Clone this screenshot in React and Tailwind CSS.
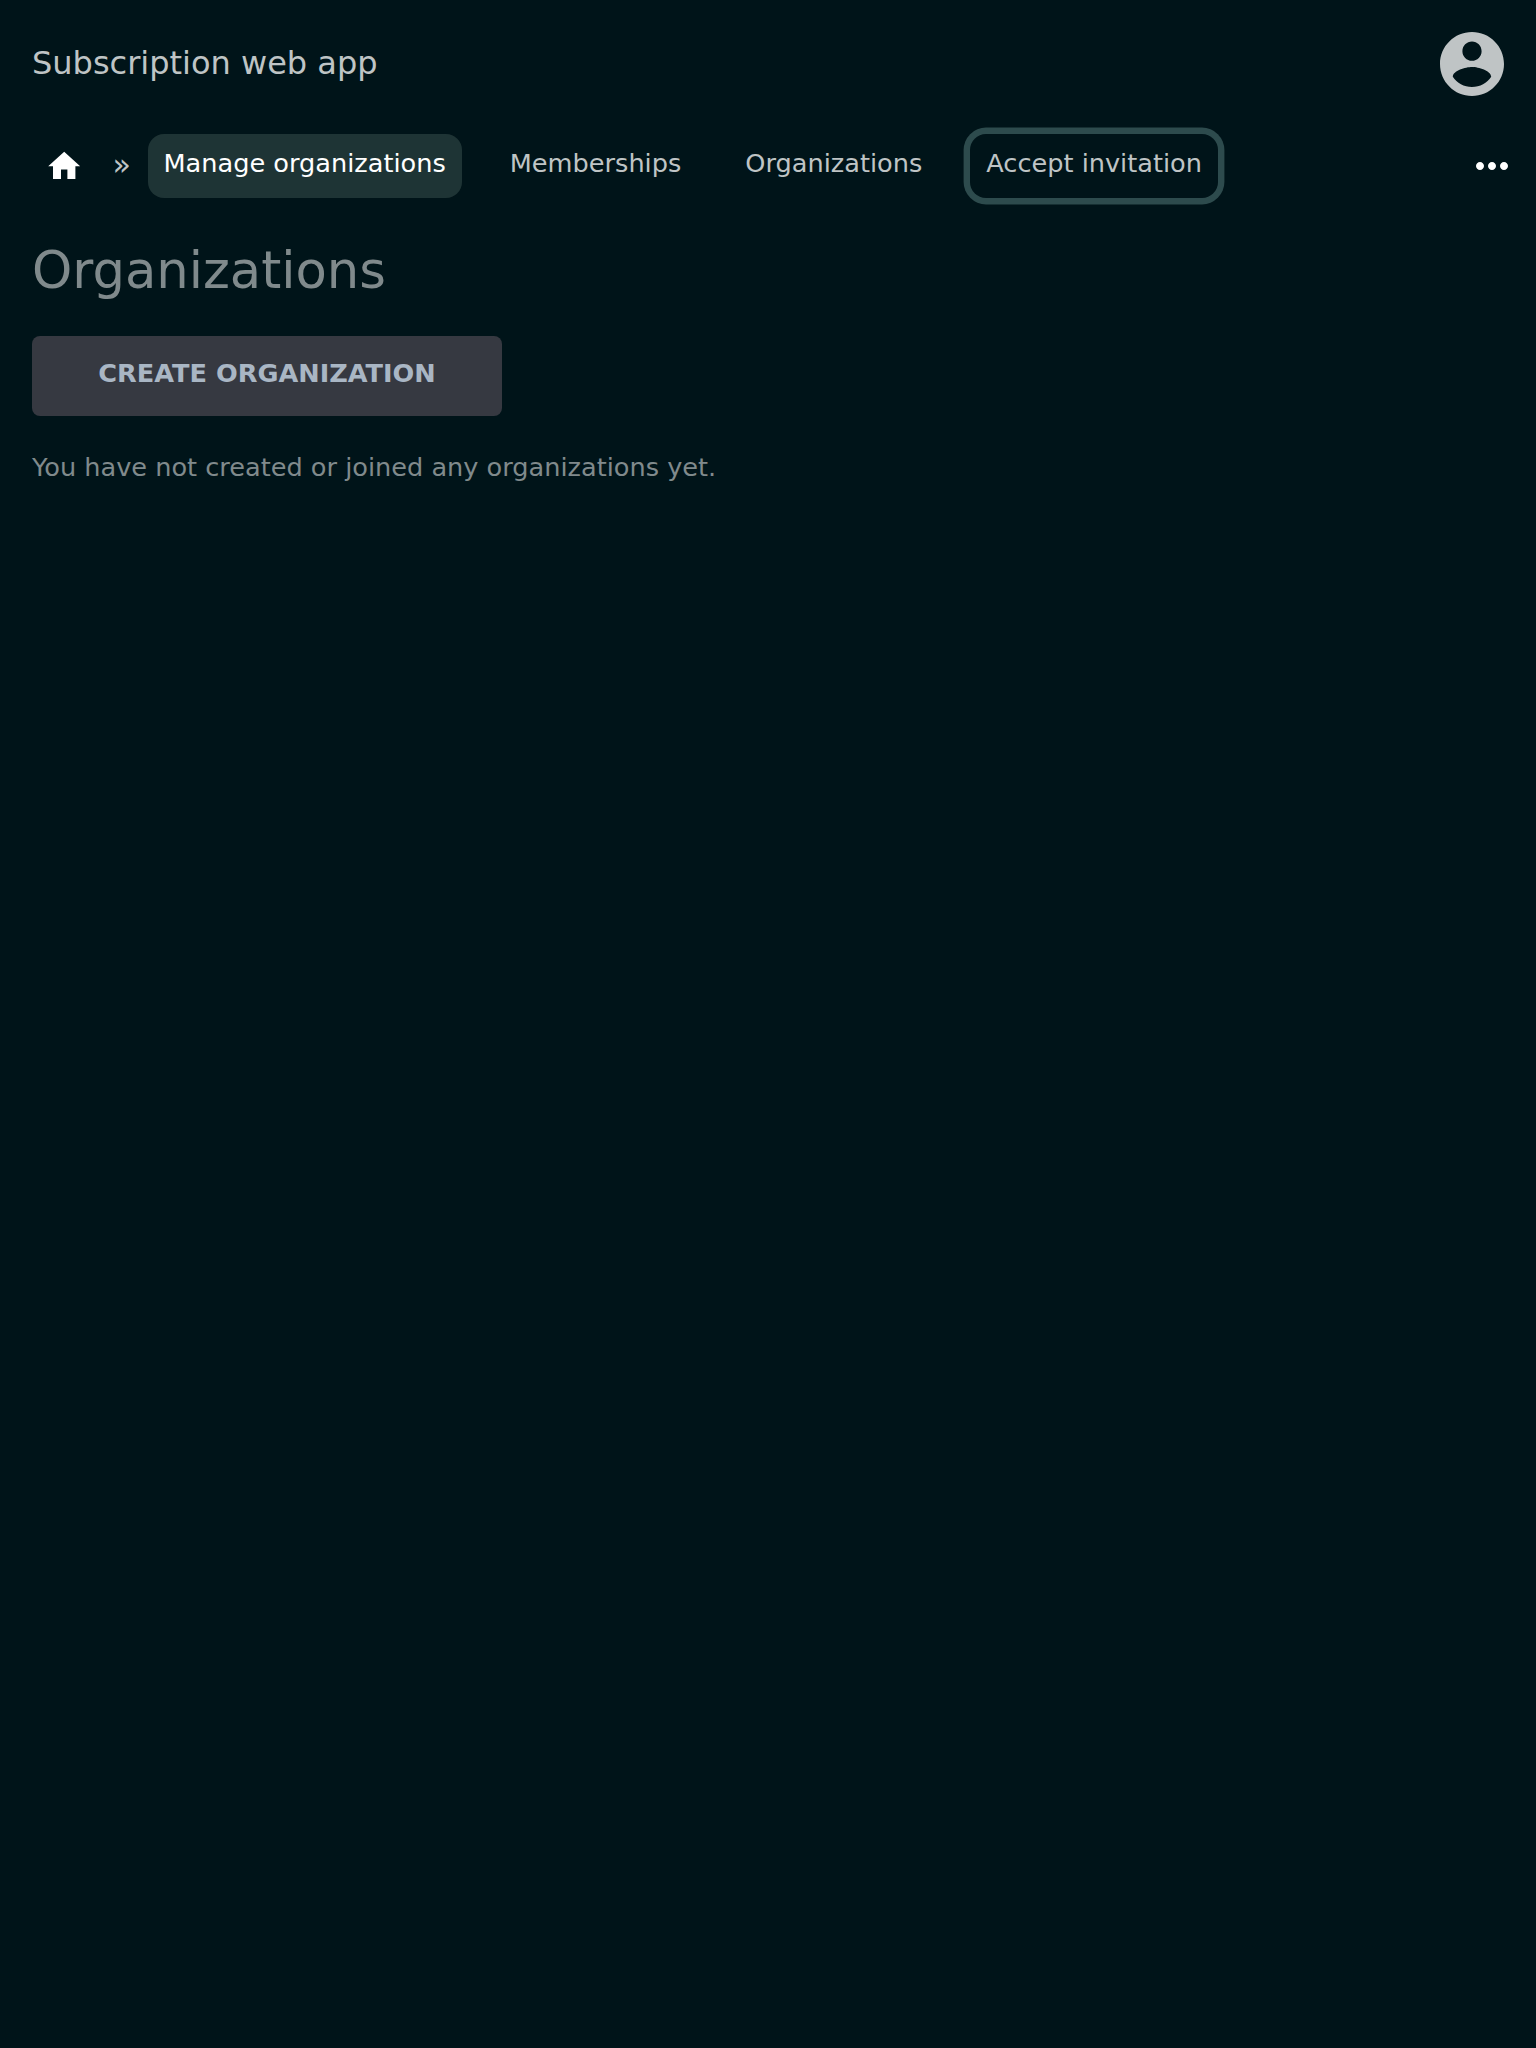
function NavItem({ children, className = "" }) {
  return (
    <a className={`flex h-16 items-start rounded-2xl px-4 pt-[13px] whitespace-nowrap ${className}`}>
      {children}
    </a>
  );
}

export default function App() {
  return (
    <div className="min-h-[2048px] bg-[#001419] px-8 pt-8 font-['DejaVu_Sans',sans-serif] text-[25.6px] leading-[32px] text-[#bfc4c5]">
      <header className="flex h-16 items-center justify-between">
        <span className="pb-0.5 text-[32px] leading-[62px]">Subscription web app</span>
        <svg className="size-16" viewBox="2 2 20 20" fill="currentColor">
          <path d="M12 2C6.48 2 2 6.48 2 12s4.48 10 10 10 10-4.48 10-10S17.52 2 12 2zm0 3c1.66 0 3 1.34 3 3s-1.34 3-3 3-3-1.34-3-3 1.34-3 3-3zm0 14.2c-2.5 0-4.71-1.28-6-3.22.03-1.99 4-3.08 6-3.08 1.99 0 5.97 1.09 6 3.08-1.29 1.94-3.5 3.22-6 3.22z" />
        </svg>
      </header>

      <nav className="mt-[38px] flex h-16 items-center">
        <a className="flex h-16 w-16 items-center justify-center text-white">
          <svg className="h-[38.4px] w-[38.4px]" viewBox="0 0 24 24" fill="currentColor">
            <path d="M10 20v-6h4v6h5v-8h3L12 3 2 12h3v8z" />
          </svg>
        </a>
        <span className="flex w-[51.5px] justify-center pb-0.5 text-[30px]">»</span>
        <div className="flex gap-8">
          <NavItem className="bg-[#1e3435] text-white">Manage organizations</NavItem>
          <NavItem>Memberships</NavItem>
          <NavItem>Organizations</NavItem>
          <NavItem className="shadow-[0_0_0_6.4px_#2d4b4d]">Accept invitation</NavItem>
        </div>
        <svg className="-mr-1 ml-auto h-2 w-8" viewBox="4 10 16 4" fill="#fff">
          <path d="M6 10c-1.1 0-2 .9-2 2s.9 2 2 2 2-.9 2-2-.9-2-2-2zm12 0c-1.1 0-2 .9-2 2s.9 2 2 2 2-.9 2-2-.9-2-2-2zm-6 0c-1.1 0-2 .9-2 2s.9 2 2 2 2-.9 2-2-.9-2-2-2z" />
        </svg>
      </nav>

      <main className="text-[#808a8c]">
        <h1 className="mt-[40px] text-[51.2px] leading-[64px]">Organizations</h1>
        <button className="mt-[34px] flex h-20 w-[470px] items-start justify-center rounded-lg bg-[#363941] pt-[21px] font-bold text-[#a9b6c4] uppercase">
          Create organization
        </button>
        <p className="mt-[35px]">You have not created or joined any organizations yet.</p>
      </main>
    </div>
  );
}
